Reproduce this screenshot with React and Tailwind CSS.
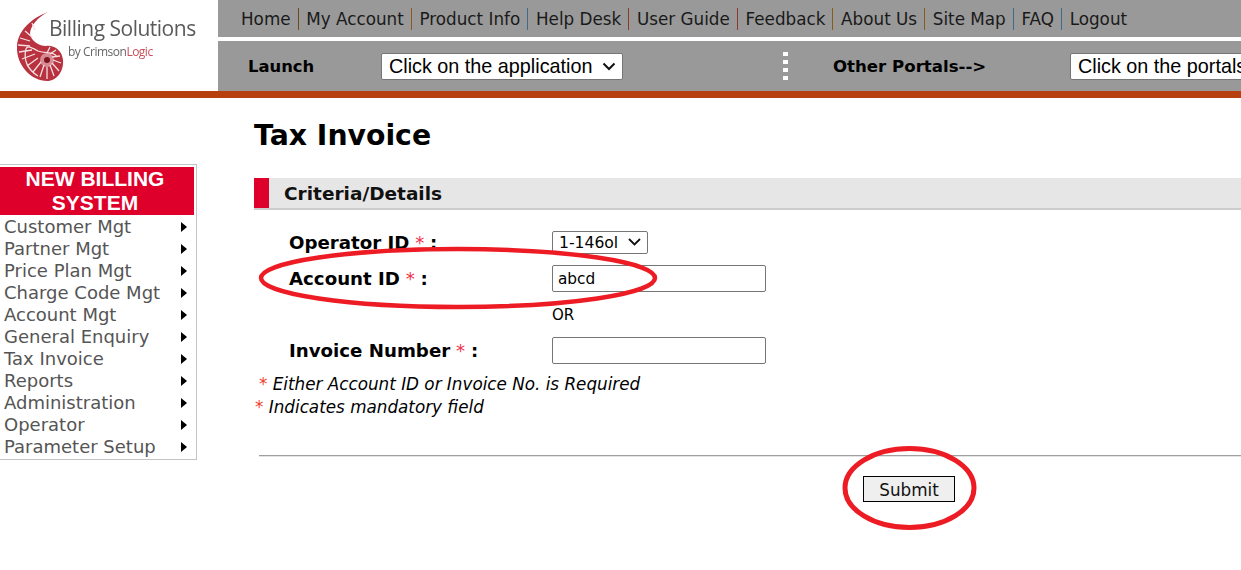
import React from "react";

const topLinks = [
  ["Home", "border-[#6b4a1c]"],
  ["My Account", "border-[#8a5a1c]"],
  ["Product Info", "border-[#3f6a8a]"],
  ["Help Desk", "border-[#8a3a2a]"],
  ["User Guide", "border-[#8a3a2a]"],
  ["Feedback", "border-[#8a5a1c]"],
  ["About Us", "border-[#8a5a1c]"],
  ["Site Map", "border-[#3f6a8a]"],
  ["FAQ", "border-[#3f6a8a]"],
  ["Logout", "border-transparent"],
];

const menuItems = [
  "Customer Mgt",
  "Partner Mgt",
  "Price Plan Mgt",
  "Charge Code Mgt",
  "Account Mgt",
  "General Enquiry",
  "Tax Invoice",
  "Reports",
  "Administration",
  "Operator",
  "Parameter Setup",
];

function Logo() {
  return (
    <div className="relative w-[218px] h-[91px] shrink-0 bg-white">
      <svg className="absolute left-[10px] top-[6px] blur-[0.4px]" width="60" height="80" viewBox="10 6 60 80">
        <path d="M48 12C32 18 18 30 17 46c-1 20 15 35 30 35 10 0 17-10 16-21-1-10-9-15-17-14-8 0-15-6-16-12 0-8 8-17 18-22Z" fill="#b8323f" />
        <circle cx="47" cy="60" r="7" fill="#d88a92" />
        <circle cx="47" cy="60" r="3" fill="#7e1520" />
        <g stroke="#f5dfe1" strokeWidth="1.300" fill="none">
          <path d="M20 38l10 3M18 45l12 1M19 52l13-2M22 59l13-5M27 66l11-8M33 72l8-10M40 77l4-12M47 79v-12M54 76l-4-11M59 71l-7-8M61 63l-8-3M60 56l-8 1M56 50l-6 4M50 47l-3 6" />
          <path d="M25 31l7 6M32 23l3 7" />
          <path d="M38 76c-10-6-15-16-12-27 1-4 6-1 12 2 8 3 16 0 19 6" />
        </g>
      </svg>
      <div className="absolute left-[49px] top-[15px] font-['Open_Sans',sans-serif] text-[21px] leading-[26px] tracking-[-0.5px] text-[#5a5a5a] whitespace-nowrap blur-[0.3px]">
        Billing Solutions
      </div>
      <div className="absolute left-[68px] top-[45px] font-['Open_Sans',sans-serif] text-[12px] leading-[14px] tracking-[-0.5px] text-[#666] whitespace-nowrap blur-[0.3px]">
        by Crimson<span className="text-[#c8505a]">Logic</span>
      </div>
    </div>
  );
}

function Header() {
  return (
    <header className="flex h-[98px] border-b-[7px] border-[#b7410e]">
      <Logo />
      <div className="flex-1 min-w-0 flex flex-col overflow-hidden">
        <nav className="h-[37px] bg-[#999999] flex items-center pl-[23px] pt-[1px] text-[16.800px] text-[#1a1a1a] font-['DejaVu_Sans',sans-serif] whitespace-nowrap">
          {topLinks.map(([label, border]) => (
            <span key={label} className={`border-r ${border} pr-[7px] mr-[7.700px] h-[22px] leading-[22px]`}>
              {label}
            </span>
          ))}
        </nav>
        <div className="mt-[4px] h-[50px] bg-[#999999] flex items-center whitespace-nowrap font-['DejaVu_Sans',sans-serif]">
          <b className="ml-[30px] w-[133px] shrink-0 pt-[3px] text-[16.400px] text-black">Launch</b>
          <div className="w-[242px] h-[27px] shrink-0 bg-white border border-[#767676] rounded-[2px] flex items-center justify-between pl-[7px] pr-[6px] pt-[1px] font-['Liberation_Sans',sans-serif] text-[19.800px] text-black">
            <span>Click on the application</span>
            <svg width="14" height="9" viewBox="0 0 14 9"><path d="M1.500 1.500 7 7l5.500-5.500" fill="none" stroke="#111" strokeWidth="2" /></svg>
          </div>
          <div className="ml-[160px] flex flex-col gap-[4px] w-[6px] shrink-0">
            <i className="block w-[5px] h-[4px] bg-white" />
            <i className="block w-[5px] h-[4px] bg-white" />
            <i className="block w-[5px] h-[4px] bg-white" />
            <i className="block w-[5px] h-[4px] bg-white" />
          </div>
          <b className="ml-[44px] w-[237px] shrink-0 pt-[3px] text-[16.600px] text-black">Other Portals--&gt;</b>
          <div className="w-[260px] h-[27px] shrink-0 bg-white border border-[#767676] rounded-[2px] flex items-center pl-[7px] pt-[1px] font-['Liberation_Sans',sans-serif] text-[19.800px] text-black">
            <span>Click on the portals</span>
          </div>
        </div>
      </div>
    </header>
  );
}

function Sidebar() {
  return (
    <aside className="w-[197px] h-[296px] mt-[66px] shrink-0 border-y border-r border-[#c4c4c4] pt-[2px] font-['DejaVu_Sans',sans-serif]">
      <div className="w-[194px] h-[48px] pr-[4px] bg-[#de002b] text-white text-center font-['Liberation_Sans',sans-serif] font-bold text-[21px] leading-[24px]">
        NEW BILLING
        <br />
        SYSTEM
      </div>
      <ul className="mt-[1px]">
        {menuItems.map((item) => (
          <li key={item} className="h-[22px] leading-[22px] flex items-center justify-between pl-[4px] pr-[9px] text-[18px] text-[#555555]">
            <span>{item}</span>
            <span className="w-0 h-0 border-y-[5px] border-y-transparent border-l-[6px] border-l-black" />
          </li>
        ))}
      </ul>
    </aside>
  );
}

function Req() {
  return <span className="text-[#f0304a] font-normal"> * </span>;
}

function Main() {
  return (
    <main className="flex-1 min-w-0 pl-[57px] font-['DejaVu_Sans',sans-serif] text-black">
      <h1 className="mt-[20px] h-[36px] leading-[36px] text-[28.300px] font-bold">Tax Invoice</h1>
      <div className="mt-[24px] h-[32px] flex bg-[#e6e6e6] border-b-2 border-[#cccccc]">
        <div className="w-[15px] bg-[#de002b]" />
        <h2 className="ml-[15px] leading-[31px] text-[18.500px] font-bold text-[#111]">Criteria/Details</h2>
      </div>

      <div className="mt-[20px] pl-[35px] text-[18.200px]">
        <div className="flex items-center h-[24px]">
          <label className="w-[263px] pt-[2px] font-bold">Operator ID<Req />:</label>
          <div className="w-[96px] h-[23px] border border-[#767676] rounded-[2px] flex items-center justify-between pl-[6px] pr-[6px] pt-[3px] text-[15.600px]">
            <span>1-146ol</span>
            <svg className="-mt-[3px]" width="13" height="8" viewBox="0 0 13 8"><path d="M1 1l5.500 5.500L12 1" fill="none" stroke="#111" strokeWidth="1.800" /></svg>
          </div>
        </div>
        <div className="flex items-center h-[27px] mt-[11px]">
          <label className="w-[263px] font-bold">Account ID<Req />:</label>
          <input readOnly value="abcd" className="w-[214px] h-[27px] border border-[#767676] rounded-[2px] px-[5px] text-[15.300px] outline-none" />
        </div>
        <div className="ml-[263px] mt-[13px] h-[20px] leading-[20px] text-[15px]">OR</div>
        <div className="flex items-center h-[27px] mt-[12px]">
          <label className="w-[263px] font-bold">Invoice Number<Req />:</label>
          <input readOnly className="w-[214px] h-[27px] border border-[#767676] rounded-[2px] px-[5px] text-[15px] outline-none" />
        </div>
      </div>

      <p className="mt-[9px] ml-[5px] h-[23px] leading-[23px] text-[16.800px] italic">
        <span className="text-[#f0402a] not-italic">* </span>Either Account ID or Invoice No. is Required
      </p>
      <p className="ml-[1px] h-[23px] leading-[23px] text-[16.800px] italic">
        <span className="text-[#f0402a] not-italic">* </span>Indicates mandatory field
      </p>

      <div className="mt-[36px] ml-[5px] h-[2px] bg-[#a0a0a0] border-b border-[#e4e4e4]" />
      <div className="mt-[19px] flex pl-[609px]">
        <button className="w-[92px] h-[26px] pt-[2px] bg-[#efefef] border border-black text-[16.800px] leading-[20px] text-[#111]">Submit</button>
      </div>
    </main>
  );
}

export default function App() {
  return (
    <div className="relative w-[1241px] h-[570px] overflow-hidden bg-white">
      <Header />
      <div className="flex">
        <Sidebar />
        <Main />
      </div>
      {/* hand drawn red circles over the screenshot */}
      <svg className="absolute inset-0 pointer-events-none" width="1241" height="570">
        <ellipse cx="458" cy="278" rx="197" ry="29" fill="none" stroke="#ed1c24" strokeWidth="4.500" />
        <ellipse cx="909.500" cy="488" rx="64.500" ry="39.500" fill="none" stroke="#ed1c24" strokeWidth="5" />
      </svg>
    </div>
  );
}
